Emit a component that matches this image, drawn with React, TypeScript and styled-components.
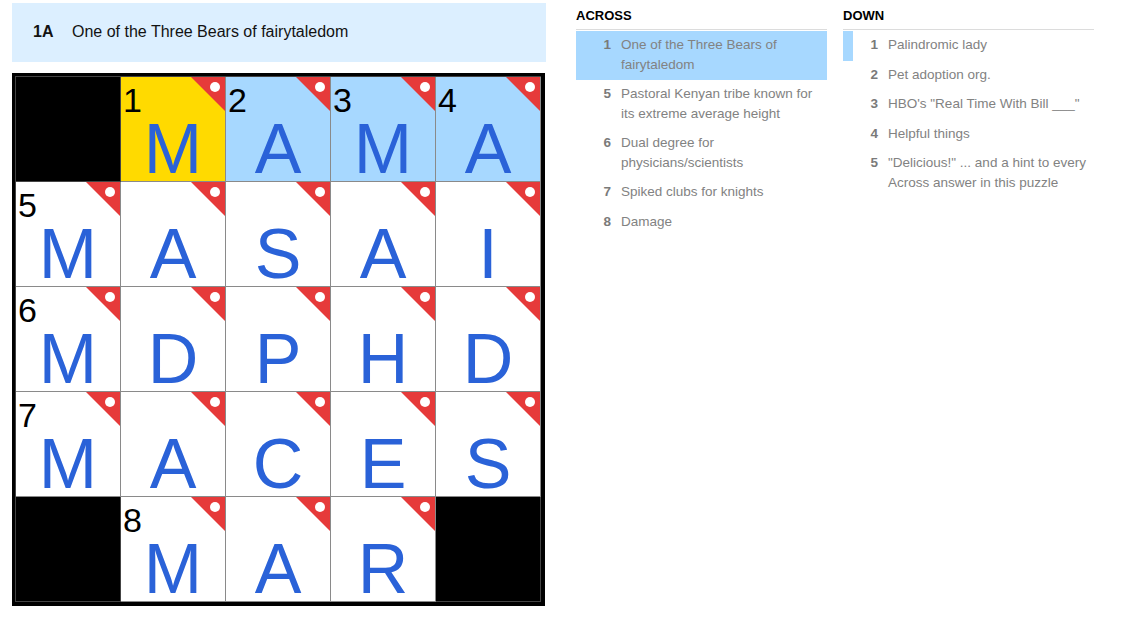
import React from "react";
import styled, { createGlobalStyle } from "styled-components";

const Global = createGlobalStyle`
  html, body { margin: 0; padding: 0; background: #fff; }
  body { font-family: "Liberation Sans", Arial, sans-serif; color: #121212; }
`;

const Page = styled.div`
  display: flex;
  align-items: flex-start;
  padding: 3px 0 0 12px;
`;

const Board = styled.div`
  display: flex;
  flex-direction: column;
  width: 534px;
`;

const ClueBar = styled.div`
  display: flex;
  align-items: center;
  height: 58px;
  padding-left: 21px;
  padding-bottom: 1px;
  background: #dcefff;
  font-size: 16px;
  margin-bottom: 11px;
`;

const ClueBarNum = styled.span`
  font-weight: 700;
  width: 39px;
`;

const Frame = styled.div`
  width: 526px;
  border: 3px solid #000;
  border-right-width: 4px;
  border-bottom-width: 4px;
  background: #000;
`;

const Grid = styled.div`
  display: grid;
  grid-template-columns: repeat(5, 105px);
  grid-template-rows: repeat(5, 105px);
  border-top: 1px solid #444;
  border-left: 1px solid #444;
`;

type Tone = "black" | "white" | "yellow" | "blue";

const toneBg: Record<Tone, string> = {
  black: "#000",
  white: "#fff",
  yellow: "#ffda00",
  blue: "#a7d8ff",
};

const Cell = styled.div<{ $tone: Tone }>`
  position: relative;
  box-sizing: border-box;
  background: ${(p) => toneBg[p.$tone]};
  border-right: 1px solid ${(p) => (p.$tone === "black" ? "#444" : "#8a8a8a")};
  border-bottom: 1px solid ${(p) => (p.$tone === "black" ? "#444" : "#8a8a8a")};
  display: flex;
  align-items: flex-end;
  justify-content: center;
`;

const CellNum = styled.span`
  position: absolute;
  top: 6px;
  left: 2px;
  font-size: 34px;
  line-height: 34px;
  color: #000;
`;

const Letter = styled.span`
  font-size: 70px;
  line-height: 64px;
  color: #2a62d8;
`;

const Flag = styled.svg`
  position: absolute;
  top: 0;
  right: 0;
  width: 34px;
  height: 34px;
`;

const Lists = styled.div`
  display: flex;
  gap: 16px;
  margin-left: 30px;
  margin-top: -3px;
`;

const ListCol = styled.div`
  width: 251px;
`;

const ListHead = styled.div`
  height: 30px;
  box-sizing: border-box;
  padding-top: 8px;
  font-size: 13px;
  font-weight: 700;
  line-height: 15px;
  color: #000;
  border-bottom: 1px solid #dcdcdc;
  margin-bottom: 1px;
`;

const Item = styled.div<{ $active?: boolean; $cross?: boolean }>`
  display: flex;
  align-items: flex-start;
  padding: 4px 0 6px 0;
  border-left: 10px solid ${(p) => (p.$cross ? "#a7d8ff" : "transparent")};
  background: ${(p) => (p.$active ? "#a7d8ff" : "transparent")};
  font-size: 13.5px;
  line-height: 19.5px;
`;

const ItemNum = styled.span`
  width: 25px;
  flex: none;
  text-align: right;
  margin-right: 10px;
  font-weight: 700;
  color: #7a7a7a;
`;

const ItemText = styled.span`
  color: #828282;
  padding-right: 8px;
`;

type Sq = { l?: string; n?: number; t: Tone };

const B: Sq = { t: "black" };
const rows: Sq[][] = [
  [B, { l: "M", n: 1, t: "yellow" }, { l: "A", n: 2, t: "blue" }, { l: "M", n: 3, t: "blue" }, { l: "A", n: 4, t: "blue" }],
  [{ l: "M", n: 5, t: "white" }, { l: "A", t: "white" }, { l: "S", t: "white" }, { l: "A", t: "white" }, { l: "I", t: "white" }],
  [{ l: "M", n: 6, t: "white" }, { l: "D", t: "white" }, { l: "P", t: "white" }, { l: "H", t: "white" }, { l: "D", t: "white" }],
  [{ l: "M", n: 7, t: "white" }, { l: "A", t: "white" }, { l: "C", t: "white" }, { l: "E", t: "white" }, { l: "S", t: "white" }],
  [B, { l: "M", n: 8, t: "white" }, { l: "A", t: "white" }, { l: "R", t: "white" }, B],
];

const across = [
  { n: 1, t: "One of the Three Bears of fairytaledom", active: true },
  { n: 5, t: "Pastoral Kenyan tribe known for its extreme average height" },
  { n: 6, t: "Dual degree for physicians/scientists" },
  { n: 7, t: "Spiked clubs for knights" },
  { n: 8, t: "Damage" },
];

const down = [
  { n: 1, t: "Palindromic lady", cross: true },
  { n: 2, t: "Pet adoption org." },
  { n: 3, t: 'HBO\'s "Real Time With Bill ___"' },
  { n: 4, t: "Helpful things" },
  { n: 5, t: '"Delicious!" ... and a hint to every Across answer in this puzzle' },
];

const FlagIcon = () => (
  <Flag viewBox="0 0 34 34">
    <polygon points="0,0 34,0 34,34" fill="#e63a3a" />
    <circle cx="24" cy="10" r="5" fill="#fff" />
  </Flag>
);

export default function App() {
  return (
    <>
      <Global />
      <Page>
        <Board>
          <ClueBar>
            <ClueBarNum>1A</ClueBarNum>
            <span>One of the Three Bears of fairytaledom</span>
          </ClueBar>
          <Frame>
            <Grid>
              {rows.flat().map((c, i) => (
                <Cell key={i} $tone={c.t}>
                  {c.t !== "black" && <FlagIcon />}
                  {c.n !== undefined && <CellNum>{c.n}</CellNum>}
                  {c.l && <Letter>{c.l}</Letter>}
                </Cell>
              ))}
            </Grid>
          </Frame>
        </Board>
        <Lists>
          <ListCol>
            <ListHead>ACROSS</ListHead>
            {across.map((c) => (
              <Item key={c.n} $active={c.active}>
                <ItemNum>{c.n}</ItemNum>
                <ItemText>{c.t}</ItemText>
              </Item>
            ))}
          </ListCol>
          <ListCol>
            <ListHead>DOWN</ListHead>
            {down.map((c) => (
              <Item key={c.n} $cross={c.cross}>
                <ItemNum>{c.n}</ItemNum>
                <ItemText>{c.t}</ItemText>
              </Item>
            ))}
          </ListCol>
        </Lists>
      </Page>
    </>
  );
}
